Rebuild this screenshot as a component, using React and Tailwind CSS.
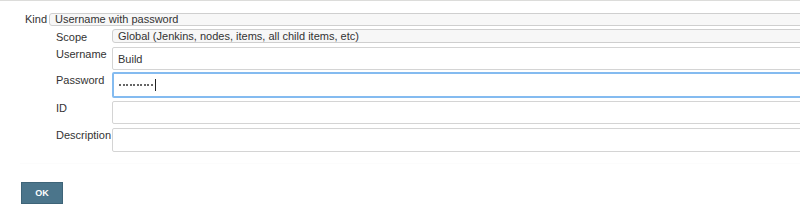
import React from "react";

export default function App() {
  const font = { fontFamily: '"Liberation Sans", Arial, sans-serif' };
  const dots = Array.from({ length: 10 });
  return (
    <div className="w-[800px] h-[224px] bg-white overflow-hidden text-[11px] text-[#333]" style={font}>
      <div className="h-px bg-[#dcdcda]" />
      {/* Kind */}
      <div className="flex items-start mt-[12px] h-[13px]">
        <div className="w-[49px] pl-[25px] leading-[13px] shrink-0">Kind</div>
        <div className="w-[800px] shrink-0 h-[13px] border border-[#cfcfcf] rounded-[3px] bg-[#f7f7f7] leading-[11px] pl-[5px]">
          Username with password
        </div>
      </div>
      {/* Scope */}
      <div className="flex items-start mt-[3px] h-[14px]">
        <div className="w-[112px] pl-[56px] leading-[16px] shrink-0">Scope</div>
        <div className="w-[760px] shrink-0 h-[14px] border border-[#cfcfcf] rounded-[3px] bg-[#f7f7f7] leading-[12px] pl-[5px]">
          Global (Jenkins, nodes, items, all child items, etc)
        </div>
      </div>
      {/* Username */}
      <div className="flex items-start mt-[4px] h-[23px]">
        <div className="w-[112px] pl-[56px] leading-[13px] pt-[1px] shrink-0">Username</div>
        <div className="w-[760px] shrink-0 h-[23px] border border-[#d4d4d4] rounded-[2px] bg-white pl-[5px] pt-[5px] leading-[12px]">
          Build
        </div>
      </div>
      {/* Password */}
      <div className="flex items-start mt-[2px] h-[26px]">
        <div className="w-[112px] pl-[56px] leading-[13px] pt-[2px] shrink-0">Password</div>
        <div className="w-[760px] shrink-0 h-[26px] border-2 border-[#84bbf0] rounded-[2px] bg-white pl-[5px] flex items-center">
          <div className="flex gap-[1.5px] items-center">
            {dots.map((_, i) => (
              <span key={i} className="block w-[2px] h-[2px] rounded-full bg-[#333]" />
            ))}
          </div>
          <span className="ml-[2px] w-px h-[12px] bg-[#222]" />
        </div>
      </div>
      {/* ID */}
      <div className="flex items-start mt-[3px] h-[23px]">
        <div className="w-[112px] pl-[56px] leading-[13px] pt-[1px] shrink-0">ID</div>
        <div className="w-[760px] shrink-0 h-[23px] border border-[#d4d4d4] rounded-[2px] bg-white" />
      </div>
      {/* Description */}
      <div className="flex items-start mt-[4px] h-[24px]">
        <div className="w-[112px] pl-[56px] leading-[13px] pt-[1px] shrink-0">Description</div>
        <div className="w-[760px] shrink-0 h-[24px] border border-[#d4d4d4] rounded-[2px] bg-white" />
      </div>
      <div className="mt-[11px] ml-[20px] h-px bg-[#fcfcfc]" />
      <div className="mt-[18px] ml-[21px]">
        <button className="w-[42px] h-[22px] bg-[#4b758b] border border-[#3e6478] text-white text-[9px] font-bold leading-none" style={font}>
          OK
        </button>
      </div>
    </div>
  );
}
